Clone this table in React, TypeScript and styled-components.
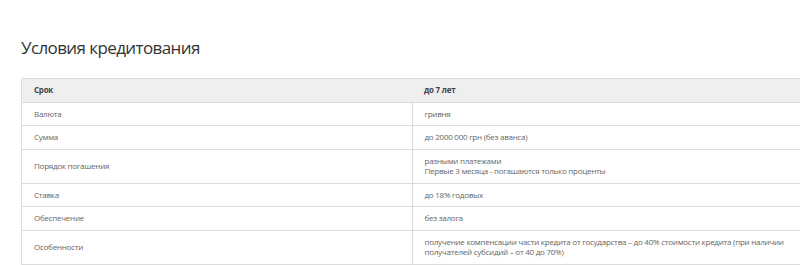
import React from 'react';
import styled, { createGlobalStyle } from 'styled-components';

const GlobalStyle = createGlobalStyle`
  body {
    margin: 0;
    background: #fff;
    font-family: 'Open Sans', 'Liberation Sans', sans-serif;
  }
`;

const rows: { label: string; value: string[] }[] = [
  { label: 'Валюта', value: ['гривня'] },
  { label: 'Сумма', value: ['до 2000 000 грн (без аванса)'] },
  {
    label: 'Порядок погашения',
    value: ['разными платежами', 'Первые 3 месяца - погашаются только проценты'],
  },
  { label: 'Ставка', value: ['до 18% годовых'] },
  { label: 'Обеспечение', value: ['без залога'] },
  {
    label: 'Особенности',
    value: [
      'получение компенсации части кредита от государства – до 40% стоимости кредита (при наличии получателей субсидий  – от 40 до 70%)',
    ],
  },
];

const App = () => {
  return (
    <Page>
      <GlobalStyle />
      <Title>Условия кредитования</Title>
      <Table>
        <thead>
          <tr>
            <HeadCell $first>Срок</HeadCell>
            <HeadCell>до 7 лет</HeadCell>
          </tr>
        </thead>
        <tbody>
          {rows.map((row) => (
            <tr key={row.label}>
              <Cell $first>{row.label}</Cell>
              <Cell>
                {row.value.map((line) => (
                  <Line key={line}>{line}</Line>
                ))}
              </Cell>
            </tr>
          ))}
        </tbody>
      </Table>
    </Page>
  );
};

const Page = styled.div`
  padding: 36px 0 0 21px;
  height: 265px;
  box-sizing: border-box;
  overflow: hidden;
`;

const Title = styled.h2`
  margin: 0 0 18px;
  font-size: 17px;
  line-height: 24px;
  font-weight: 400;
  letter-spacing: -0.6px;
  color: #333;
`;

const Table = styled.table`
  width: 781px;
  border-collapse: collapse;
  border: 1px solid #dcdcdc;
  color: #666;
  font-size: 8px;
  line-height: 10.5px;
  letter-spacing: -0.25px;
`;

const HeadCell = styled.th<{ $first?: boolean }>`
  text-align: left;
  font-weight: 700;
  color: #444;
  background: #efefef;
  padding: 6px 12px;
  width: ${(p) => (p.$first ? '366px' : 'auto')};
  border-bottom: 1px solid #dcdcdc;
`;

const Cell = styled.td<{ $first?: boolean }>`
  padding: 6px 12px;
  vertical-align: middle;
  border-bottom: 1px solid #dcdcdc;
  border-right: ${(p) => (p.$first ? '1px solid #dcdcdc' : 'none')};
`;

const Line = styled.div``;

export default App;
